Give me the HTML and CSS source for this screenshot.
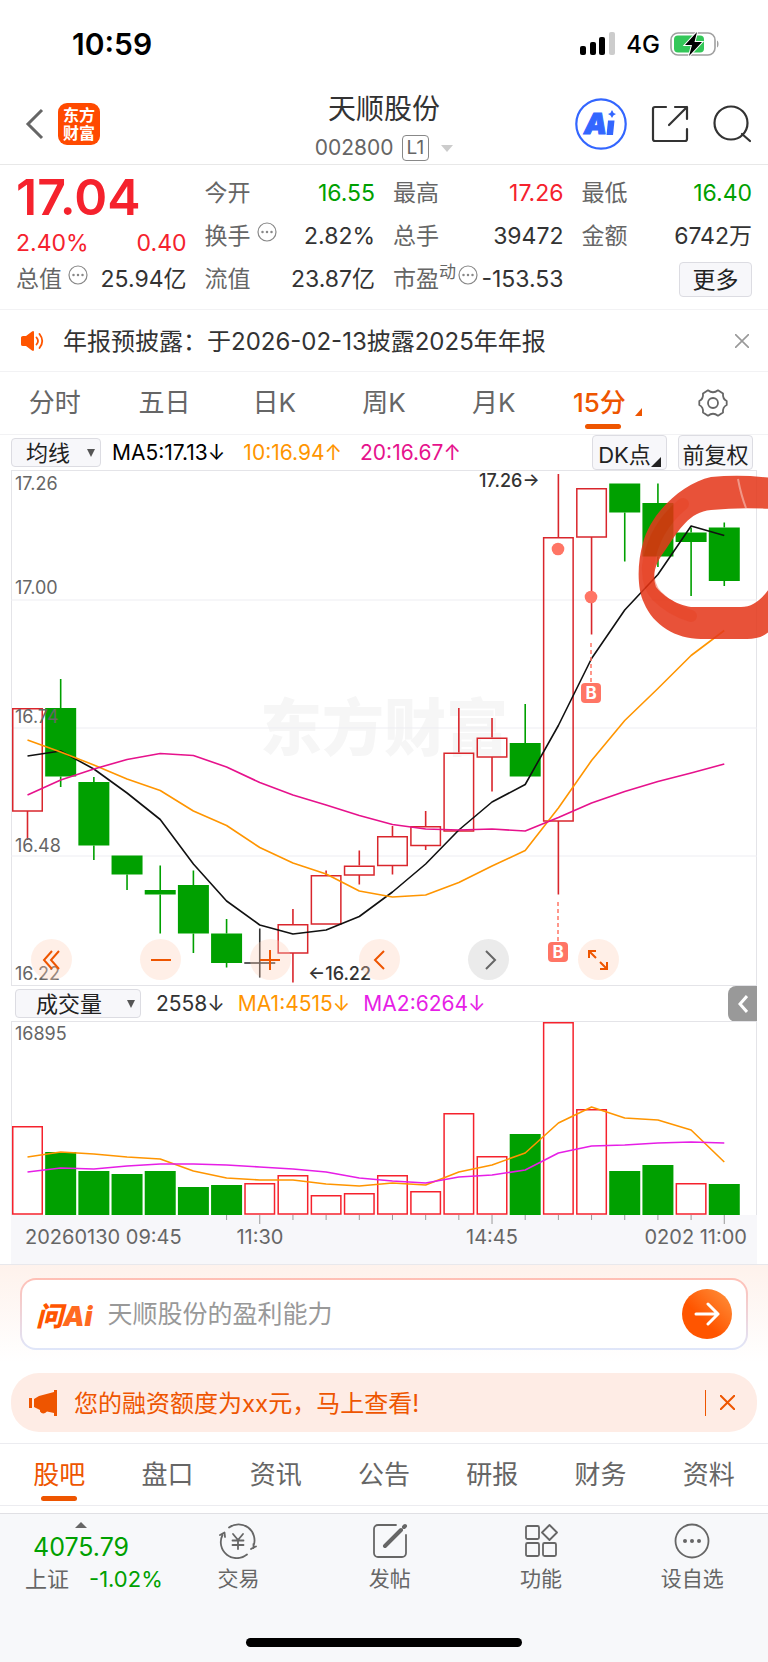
FILE: index.html
```html
<!DOCTYPE html>
<html lang="zh-CN">
<head>
    <meta charset="UTF-8">
    <meta name="viewport" content="width=device-width, initial-scale=1.0">
    <title>天顺股份 002800</title>
    <link rel="stylesheet" href="styles.css">
</head>
<body>
    <div class="status-bar">
        <span class="time">10:59</span>
        <div class="status-icons">
            <svg width="36" height="24" viewBox="0 0 36 24">
                <rect x="0" y="14" width="6" height="9" rx="2"/>
                <rect x="10" y="10" width="6" height="13" rx="2"/>
                <rect x="19" y="5" width="6" height="18" rx="2"/>
                <rect x="29" y="0" width="6" height="23" rx="2" fill="#ccc"/>
            </svg>
            <span class="network">4G</span>
            <svg width="50" height="24" viewBox="0 0 50 24">
                <rect x="1" y="1" width="44" height="22" rx="7" fill="none" stroke="#a0a0a0" stroke-width="1.6"/>
                <rect x="4" y="3.5" width="30" height="17" rx="4" fill="#34c759"/>
                <path d="M47 8.5c2 .8 2 6.200 0 7z" fill="#a0a0a0"/>
                <path d="M27 0 15 13h7l-3 11 13-14h-7.500z" stroke="#fff" stroke-width="2" paint-order="stroke"/>
            </svg>
        </div>
    </div>

    <header class="header">
        <div class="header-left">
            <button class="icon-btn" aria-label="返回">
                <svg width="20" height="32" viewBox="0 0 20 32" fill="none" stroke="#666" stroke-width="3"><path d="M18 2 4 16l14 14"/></svg>
            </button>
            <a class="logo" href="#">东方<br>财富</a>
        </div>
        <div class="header-title">
            <h1>天顺股份</h1>
            <div class="code">
                <span>002800</span>
                <span class="level">L1</span>
                <svg width="12" height="7" viewBox="0 0 12 7"><path d="M0 0h12L6 7z" fill="#ccc"/></svg>
            </div>
        </div>
        <div class="header-right">
            <button class="icon-btn" aria-label="AI">
                <svg width="52" height="52" viewBox="0 0 52 52">
                    <circle cx="26" cy="26" r="24.700" fill="none" stroke="#3366ff" stroke-width="2.200"/>
                    <text class="ai-text" x="9" y="36">A</text>
                    <path d="M33 22.500h6.500L38 37h-6.500z" fill="#3366ff"/>
                    <path d="M37 12q.8 3.200 4 4-3.200.8-4 4-.8-3.200-4-4 3.200-.8 4-4z" fill="#3366ff"/>
                </svg>
            </button>
            <button class="icon-btn" aria-label="分享">
                <svg width="38" height="38" viewBox="0 0 38 38" fill="none" stroke="#333" stroke-width="2.200" stroke-linecap="round" stroke-linejoin="round">
                    <path d="M15 2H4a2 2 0 0 0-2 2v30a2 2 0 0 0 2 2h30a2 2 0 0 0 2-2V24M24 2h12v12M36 2 18 20"/>
                </svg>
            </button>
            <button class="icon-btn" aria-label="搜索">
                <svg width="38" height="38" viewBox="0 0 38 38" fill="none" stroke="#333" stroke-width="2.200" stroke-linecap="round">
                    <circle cx="18" cy="18" r="16.500"/><path d="m29 29 8 7"/>
                </svg>
            </button>
        </div>
    </header>

    <section class="quote">
        <div class="quote-col">
            <div class="price">17.04</div>
            <div class="change"><span>2.40%</span><span>0.40</span></div>
            <div class="item">
                <span class="name">总值</span>
                <svg class="info" viewBox="0 0 20 20"><circle cx="10" cy="10" r="9"/><path d="M5.500 10h0M10 10h0M14.500 10h0"/></svg>
                <span class="value">25.94亿</span>
            </div>
        </div>
        <div class="quote-col">
            <div class="item"><span class="name">今开</span><span class="value green">16.55</span></div>
            <div class="item">
                <span class="name">换手</span>
                <svg class="info" viewBox="0 0 20 20"><circle cx="10" cy="10" r="9"/><path d="M5.500 10h0M10 10h0M14.500 10h0"/></svg>
                <span class="value">2.82%</span>
            </div>
            <div class="item"><span class="name">流值</span><span class="value">23.87亿</span></div>
        </div>
        <div class="quote-col">
            <div class="item"><span class="name">最高</span><span class="value red">17.26</span></div>
            <div class="item"><span class="name">总手</span><span class="value">39472</span></div>
            <div class="item pe">
                <span class="name">市盈<sup>动</sup></span>
                <svg class="info" viewBox="0 0 20 20"><circle cx="10" cy="10" r="9"/><path d="M5.500 10h0M10 10h0M14.500 10h0"/></svg>
                <span class="value">-153.53</span>
            </div>
        </div>
        <div class="quote-col">
            <div class="item"><span class="name">最低</span><span class="value green">16.40</span></div>
            <div class="item"><span class="name">金额</span><span class="value">6742万</span></div>
            <div class="item"><button class="more">更多</button></div>
        </div>
    </section>

    <div class="notice">
        <svg width="24" height="20" viewBox="0 0 24 20" fill="#ff5500">
            <path d="M1 6.500Q1 5 3 5h3l6-4.600q2-1 2 1v17.200q0 2-2 1L6 15H3q-2 0-2-1.500z"/>
            <path d="M16.500 6.500q3 3.500 0 7M19.500 3q5.500 7 0 14" fill="none" stroke="#ff5500" stroke-width="1.800" stroke-linecap="round"/>
        </svg>
        <p>年报预披露：于2026-02-13披露2025年年报</p>
        <button class="icon-btn" aria-label="关闭">
            <svg width="14" height="14" viewBox="0 0 14 14" stroke="#999" stroke-width="1.600"><path d="m0 0 14 14M14 0 0 14"/></svg>
        </button>
    </div>

    <nav class="tabs period-tabs">
        <a href="#">分时</a>
        <a href="#">五日</a>
        <a href="#">日K</a>
        <a href="#">周K</a>
        <a href="#">月K</a>
        <a href="#" class="active">15分<svg class="corner" width="7" height="8" viewBox="0 0 7 8"><path d="M7 0v8H0z" fill="#ee5500"/></svg></a>
        <button class="icon-btn" aria-label="设置">
            <svg width="30" height="28" viewBox="0 0 30 28" fill="none" stroke="#666" stroke-width="1.800" stroke-linejoin="round">
                <path d="M10 1.300q5 4 10 0l5 3.200q-.5 5.500 3.700 7.500v4q-4.200 2-3.700 7.500l-5 3.200q-5-4-10 0l-5-3.200q.5-5.500-3.700-7.500v-4Q5.500 10 5 4.500z"/>
                <circle cx="15" cy="14" r="5"/>
            </svg>
        </button>
    </nav>

    <div class="indicator-row">
        <label class="picker">
            <select aria-label="主图指标"><option>均线</option></select>
            <svg width="8" height="8" viewBox="0 0 8 8"><path d="M0 0h8L4 8z" fill="#555"/></svg>
        </label>
        <span class="ma5">MA5:17.13↓</span>
        <span class="ma10">10:16.94↑</span>
        <span class="ma20">20:16.67↑</span>
        <div class="chart-options">
            <button class="option">DK点<svg width="10" height="10" viewBox="0 0 10 10"><path d="M10 0v10H0z" fill="#222"/></svg></button>
            <button class="option">前复权</button>
        </div>
    </div>

    <div class="chart">
        <svg id="kline" class="kline" viewBox="0 0 746 516">
            <text class="watermark" x="249" y="281">东方财富</text>
            <path class="frame" d="M0 .5h746M0 515.500h746M.5 0v516M745.500 0v516"/>
            <path class="grid" d="M0 130h746M0 258h746M0 386h746"/>
            <g id="candles"></g>
            <g id="ma-lines"></g>
            <g class="axis-label">
                <text x="4" y="20">17.26</text>
                <text x="4" y="124">17.00</text>
                <text x="4" y="253">16.74</text>
                <text x="4" y="382">16.48</text>
                <text x="4" y="510">16.22</text>
            </g>
            <text class="extreme" x="468" y="17">17.26→</text>
            <text class="extreme" x="297" y="510">←16.22</text>
            <g class="signal">
                <circle cx="547" cy="79" r="6.300"/>
                <circle cx="580" cy="127" r="6.300"/>
                <path d="M547 432v40M580 173v40"/>
                <rect x="537" y="472" width="20" height="20" rx="4"/>
                <rect x="570" y="213" width="20" height="20" rx="4"/>
                <text x="547" y="488">B</text>
                <text x="580" y="229">B</text>
            </g>
            <g class="marker">
                <path d="M760 8Q730 4 700 7C672 13 640 42 632 73C626 93 626 119 633 133C642 155 665 169 690 169H736C746 169 754 166 760 160V116C752 128 743 137 730 137H680C665 135 650 124 645 117C640 103 646 91 655 79C668 60 678 42 700 40Q730 37 760 39Z"/>
                <path class="marker-dark" d="M672 34C650 52 640 74 637 96Q636 116 646 126Q660 140 680 146"/>
                <path class="marker-gap" d="M727 9q3 16 8 29"/>
            </g>
        </svg>
        <div class="chart-tools">
            <button class="tool" aria-label="最早"><svg width="22" height="22" viewBox="0 0 22 22"><path d="M11 2 3 11l8 9M18 2l-8 9 8 9"/></svg></button>
            <button class="tool" aria-label="缩小"><svg width="22" height="22" viewBox="0 0 22 22"><path d="M1 11h20"/></svg></button>
            <button class="tool" aria-label="放大"><svg width="22" height="22" viewBox="0 0 22 22"><path d="M1 11h20M11 1v20"/></svg></button>
            <button class="tool" aria-label="左移"><svg width="22" height="22" viewBox="0 0 22 22"><path d="m15 2-9 9 9 9"/></svg></button>
            <button class="tool disabled" aria-label="右移"><svg width="22" height="22" viewBox="0 0 22 22"><path d="m8 2 9 9-9 9"/></svg></button>
            <button class="tool" aria-label="全屏"><svg width="22" height="22" viewBox="0 0 22 22"><path d="M2 9V2h7M2 2l7 7M20 13v7h-7M20 20l-7-7"/></svg></button>
        </div>
    </div>

    <div class="indicator-row volume-row">
        <label class="picker wide">
            <select aria-label="副图指标"><option>成交量</option></select>
            <svg width="8" height="8" viewBox="0 0 8 8"><path d="M0 0h8L4 8z" fill="#555"/></svg>
        </label>
        <span>2558↓</span>
        <span class="ma10">MA1:4515↓</span>
        <span class="vol2">MA2:6264↓</span>
        <button class="collapse" aria-label="展开">
            <svg width="10" height="18" viewBox="0 0 10 18" fill="none" stroke="#fff" stroke-width="3"><path d="M9 1 2 9l7 8"/></svg>
        </button>
    </div>

    <div class="chart">
        <svg id="volume" class="kline" viewBox="0 0 746 243">
            <rect class="axis-bg" x="0" y="194" width="746" height="49"/>
            <path class="frame" d="M0 .5h746M.5 0v194M745.500 0v194"/>
            <text class="axis-label" x="4" y="19">16895</text>
            <g id="volume-bars"></g>
            <g id="volume-lines"></g>
            <g id="ticks"></g>
            <g class="time-label">
                <text x="14" y="223">20260130 09:45</text>
                <text x="249" y="223" text-anchor="middle">11:30</text>
                <text x="481" y="223" text-anchor="middle">14:45</text>
                <text x="736" y="223" text-anchor="end">0202 11:00</text>
            </g>
        </svg>
    </div>

    <section class="ask">
        <form class="ask-box">
            <label for="ask-input" class="ask-logo">问<span>Ai</span></label>
            <input type="text" id="ask-input" placeholder="天顺股份的盈利能力">
            <button type="button" class="ask-btn" aria-label="发送">
                <svg width="26" height="24" viewBox="0 0 26 24" fill="none" stroke="#fff" stroke-width="3" stroke-linecap="round" stroke-linejoin="round"><path d="M2 12h22M14 2l10 10-10 10"/></svg>
            </button>
        </form>
    </section>

    <div class="banner">
        <svg width="28" height="26" viewBox="0 0 28 26" fill="#ee5500">
            <path d="M0 8h3v10H0zM5 9l5-3L25 2V0h3v26h-3v-3l-7-1.500q-4 4-7 0V20l-6-3z"/>
        </svg>
        <a href="#">您的融资额度为xx元，马上查看!</a>
        <button class="icon-btn" aria-label="关闭">
            <svg width="15" height="15" viewBox="0 0 15 15" stroke="#ee5500" stroke-width="2"><path d="m0 0 15 15M15 0 0 15"/></svg>
        </button>
    </div>

    <nav class="tabs info-tabs">
        <a href="#" class="active">股吧</a>
        <a href="#">盘口</a>
        <a href="#">资讯</a>
        <a href="#">公告</a>
        <a href="#">研报</a>
        <a href="#">财务</a>
        <a href="#">资料</a>
    </nav>

    <footer class="bottom">
        <div class="bottom-bar">
            <a class="index" href="#">
                <span class="index-value">
                    <svg width="12" height="6" viewBox="0 0 12 6"><path d="M0 6h12L6 0z" fill="#666"/></svg>
                    4075.79
                </span>
                <span class="index-name">上证<em>-1.02%</em></span>
            </a>
            <button class="action">
                <svg width="38" height="36" viewBox="0 0 38 36" fill="none" stroke="#666" stroke-width="1.800" stroke-linecap="round" stroke-linejoin="round">
                    <path d="M10 4.500A16 16 0 0 1 34.500 23M32 26l2.500-1.500 2.500-1M28 31.500A16 16 0 0 1 3.500 12M1 12l4.500-2.500.5 4.500M34.500 21v4"/>
                    <path d="m14 11 5 6 5-6M19 17v9M13.500 17.500h11M13.500 22h11"/>
                </svg>
                交易
            </button>
            <button class="action">
                <svg width="36" height="36" viewBox="0 0 36 36" fill="none" stroke="#666" stroke-width="1.800" stroke-linecap="round">
                    <path d="M24 2H6a4 4 0 0 0-4 4v24a4 4 0 0 0 4 4h24a4 4 0 0 0 4-4V12"/>
                    <path d="M13 23 29 7M32 4l1-1" stroke-width="4"/>
                </svg>
                发帖
            </button>
            <button class="action">
                <svg width="36" height="36" viewBox="0 0 36 36" fill="none" stroke="#666" stroke-width="1.800" stroke-linejoin="round">
                    <rect x="3" y="3" width="13" height="13" rx="1.500"/>
                    <rect x="3" y="20" width="13" height="13" rx="1.500"/>
                    <rect x="20" y="20" width="13" height="13" rx="1.500"/>
                    <path d="m26.500 2 7.500 7.500-7.500 7.500L19 9.500z"/>
                </svg>
                功能
            </button>
            <button class="action">
                <svg width="36" height="36" viewBox="0 0 36 36">
                    <circle cx="18" cy="18" r="16.500" fill="none" stroke="#666" stroke-width="1.800"/>
                    <g fill="#666"><circle cx="11" cy="18" r="2"/><circle cx="18" cy="18" r="2"/><circle cx="25" cy="18" r="2"/></g>
                </svg>
                设自选
            </button>
        </div>
        <div class="home-indicator"></div>
    </footer>

    <script>
        const START = 16.5;
        const STEP = 33.18;
        const BODY = 31;

        // [color, high, body top, body bottom, low]
        const candles = [
            ['red', 238, 238, 341, 370],
            ['green', 209, 238, 306.5, 317],
            ['green', 307, 312, 375.5, 390],
            ['green', 385.5, 385.5, 404.5, 420],
            ['green', 395.5, 420, 424.5, 463.5],
            ['green', 400.5, 415, 463.5, 483],
            ['green', 449, 463.5, 493, 497.5],
            ['flat', 458.5, 493, 493, 507.5],
            ['red', 439, 454, 483, 512.5],
            ['red', 400.5, 405, 454, 454],
            ['red', 380.5, 395.5, 405, 414.5],
            ['red', 356, 366, 395.5, 404.5],
            ['red', 341, 356, 375.5, 380],
            ['red', 238, 282.5, 361, 361],
            ['red', 248, 267.5, 287, 321.5],
            ['green', 234, 273, 306.5, 306.5],
            ['red', 4, 67, 351, 424.5],
            ['red', 18, 18, 67, 164.5],
            ['green', 13.5, 13.5, 42.5, 91.5],
            ['green', 13.5, 33, 86.5, 97],
            ['green', 57.5, 62.5, 72, 126],
            ['green', 52.5, 57.5, 111, 116]
        ];

        const priceLines = {
            ma5: [286, 281, 299, 323, 349.5, 394, 431, 455, 464, 460, 446.5, 422, 394, 360, 332, 314.5, 255.5, 188.5, 140, 104.5, 56, 65.5],
            ma10: [270, 282, 295, 309, 320.5, 341, 355.5, 377.5, 393, 404, 421, 427, 425, 412.5, 396, 380.5, 338, 290.5, 250.5, 218.5, 185.5, 160.5],
            ma20: [325, 310, 299, 289.5, 283.5, 285.5, 297, 312.5, 325, 335, 345.5, 354.5, 359, 360, 359, 361, 347.5, 333, 321.5, 311.5, 303, 294]
        };

        const volumeTops = [105, 131, 150, 153, 150, 166, 164, 162, 154, 174, 172, 154, 170, 92, 135, 113, 1, 88, 150, 144, 162, 163];
        const volumeUp = [0, 7, 8, 9, 10, 11, 12, 13, 14, 16, 17, 20];
        const VOLUME_BASE = 194;

        const volumeLines = {
            ma10: [136, 131, 133, 136, 138, 150, 157, 159, 159, 163, 165, 162, 164, 151, 144, 132, 102, 86, 97, 99, 109, 141],
            vol2: [151, 147, 148, 145, 143, 143, 144, 146, 148, 151, 157, 160, 162, 156, 154, 149, 132, 125, 124, 122, 121, 122]
        };

        function xAt(i) {
            return START + STEP * i;
        }

        function drawBox(color, x, top, bottom) {
            if (color === 'green') {
                return `<rect class="body-green" x="${x - BODY / 2}" y="${top}" width="${BODY}" height="${bottom - top}"/>`;
            }
            return `<rect class="body-red" x="${x - BODY / 2 + 0.75}" y="${top + 0.75}" width="${BODY - 1.5}" height="${bottom - top - 0.75}"/>`;
        }

        function drawLines(id, lines) {
            let html = '';
            for (const name in lines) {
                const points = lines[name].map((y, i) => `${xAt(i)},${y}`).join(' ');
                html += `<polyline class="line line-${name}" points="${points}"/>`;
            }
            document.getElementById(id).innerHTML = html;
        }

        document.getElementById('candles').innerHTML = candles.map(([color, high, top, bottom, low], i) => {
            const x = xAt(i);
            const wick = `<path class="wick-${color}" d="M${x} ${high}V${top}M${x} ${bottom}V${low}"/>`;
            if (color === 'flat') {
                return wick + `<path class="wick-flat" d="M${x - BODY / 2} ${top}h${BODY}"/>`;
            }
            return wick + drawBox(color, x, top, bottom);
        }).join('');

        document.getElementById('volume-bars').innerHTML = volumeTops.map((top, i) => {
            const color = volumeUp.includes(i) ? 'red' : 'green';
            return drawBox(color, xAt(i), top, VOLUME_BASE - (color === 'red' ? 1 : 0));
        }).join('');

        // Time ticks, longer on labelled bars
        let ticks = '';
        for (let i = 6; i < candles.length; i++) {
            ticks += `<path class="tick" d="M${xAt(i)} ${VOLUME_BASE}v${i % 7 === 0 ? 9 : 5}"/>`;
        }
        document.getElementById('ticks').innerHTML = ticks;

        drawLines('ma-lines', priceLines);
        drawLines('volume-lines', volumeLines);
    </script>
</body>
</html>
```

FILE: styles.css
```css
* {
    box-sizing: border-box;
}

body {
    margin: 0;
    font-family: Inter, "Noto Sans CJK SC", sans-serif;
    font-size: 22px;
    color: #333;
    background: #fff;
    overflow-x: hidden;
}

svg {
    flex-shrink: 0;
}

button {
    padding: 0;
    border: 0;
    background: none;
    font: inherit;
    color: inherit;
}

a {
    color: inherit;
    text-decoration: none;
}

.icon-btn {
    display: flex;
    align-items: center;
    justify-content: center;
}

.red {
    color: #f5222d;
}

.green {
    color: #00a000;
}

/* Status bar */
.status-bar {
    display: flex;
    justify-content: space-between;
    align-items: center;
    height: 88px;
    padding: 0 48px 0 72px;
    color: #000;
}

.time {
    font-size: 30px;
    font-weight: 600;
}

.status-icons {
    display: flex;
    align-items: center;
    gap: 10px;
}

.network {
    font-size: 24px;
    font-weight: 500;
}

/* Header */
.header {
    display: grid;
    grid-template-columns: 1fr auto 1fr;
    align-items: center;
    height: 77px;
    padding: 0 17px;
    border-bottom: 1px solid #e8e8e8;
}

.header-left {
    display: flex;
    align-items: center;
    gap: 14px;
    padding: 0 0 4px 7px;
}

.logo {
    display: flex;
    align-items: center;
    justify-content: center;
    width: 42px;
    height: 42px;
    border-radius: 9px;
    background: #ff4a00;
    color: #fff;
    font-size: 16px;
    line-height: 18px;
    font-weight: 700;
}

.header-title {
    text-align: center;
}

h1 {
    margin: 0 0 4px;
    font-size: 28px;
    line-height: 40px;
    font-weight: 400;
}

.code {
    display: flex;
    align-items: center;
    justify-content: center;
    gap: 8px;
    font-size: 21px;
    line-height: 30px;
    color: #666;
}

.code svg {
    margin-left: 4px;
}

.level {
    padding: 0 4px;
    border: 1px solid #888;
    border-radius: 4px;
    font-size: 19px;
    line-height: 24px;
}

.header-right {
    display: flex;
    align-items: center;
    justify-content: flex-end;
    gap: 24px;
    padding-bottom: 4px;
}

.ai-text {
    fill: #3366ff;
    stroke: #3366ff;
    stroke-width: 1;
    font-size: 29px;
    font-weight: 900;
    font-style: italic;
}

/* Quote */
.quote {
    display: grid;
    grid-template-columns: repeat(4, 1fr);
    gap: 18px;
    padding: 7px 16px 8px;
    border-bottom: 1px solid #f2f2f4;
}

.quote-col {
    display: flex;
    flex-direction: column;
}

.price {
    height: 50px;
    font-size: 50px;
    line-height: 50px;
    font-weight: 600;
    color: #f5222d;
}

.change {
    display: flex;
    justify-content: space-between;
    height: 36px;
    font-size: 23px;
    line-height: 42px;
    color: #f5222d;
}

.item {
    display: flex;
    align-items: center;
    height: 43px;
    line-height: 43px;
    white-space: nowrap;
}

.name {
    font-size: 23px;
    color: #666;
}

.name sup {
    font-size: 17px;
    line-height: 1;
}

.value {
    margin-left: auto;
    font-size: 23px;
}

.info {
    width: 20px;
    height: 20px;
    margin: 0 0 10px 6px;
    fill: none;
    stroke: #888;
    stroke-width: 1.2;
}

.info path {
    stroke-width: 2.5;
    stroke-linecap: round;
}

.pe .info {
    margin-left: 2px;
}

.more {
    width: 73px;
    height: 35px;
    margin-left: auto;
    border: 1px solid #dcdce2;
    border-radius: 4px;
    background: #f7f7fa;
    font-size: 23px;
    line-height: 30px;
    color: #222;
}

/* Notice */
.notice {
    display: flex;
    align-items: center;
    height: 62px;
    padding: 0 19px 0 20px;
    border-bottom: 1px solid #f2f2f4;
}

.notice p {
    flex: 1;
    margin: 0 0 2px 19px;
    font-size: 24px;
}

/* Tabs */
.tabs {
    display: grid;
    grid-template-columns: repeat(7, 1fr);
    height: 63px;
    font-size: 26px;
    line-height: 62px;
    text-align: center;
    color: #666;
}

.tabs a {
    position: relative;
}

.tabs .active {
    color: #ee5500;
}

.tabs .active::after {
    content: "";
    position: absolute;
    left: 50%;
    bottom: 5px;
    width: 36px;
    height: 5px;
    margin-left: -18px;
    border-radius: 3px;
    background: #ee5500;
}

.period-tabs {
    border-bottom: 1px solid #f2f2f4;
}

.period-tabs .active {
    padding-right: 8px;
    font-weight: 500;
}

.corner {
    position: absolute;
    right: 16px;
    bottom: 18px;
}

/* Indicator rows */
.indicator-row {
    display: flex;
    align-items: center;
    gap: 18px;
    height: 35px;
    margin: 0 11px;
    font-size: 21px;
    white-space: nowrap;
}

.picker {
    display: flex;
    align-items: center;
    width: 90px;
    height: 29px;
    margin-right: -7px;
    padding-right: 5px;
    border: 1px solid #dcdce2;
    border-radius: 4px;
    background: #f7f7fa;
    font-size: 22px;
}

.picker select {
    flex: 1;
    min-width: 0;
    padding: 0 0 0 14px;
    border: 0;
    background: none;
    appearance: none;
    font: inherit;
    line-height: 26px;
    color: #222;
}

.ma5 {
    color: #000;
}

.ma10 {
    color: #ff9500;
}

.ma20 {
    color: #e6128c;
}

.vol2 {
    color: #e61ee6;
}

.chart-options {
    display: flex;
    gap: 11px;
    margin: 0 4px 0 auto;
}

.option {
    display: flex;
    align-items: center;
    justify-content: center;
    width: 75px;
    height: 35px;
    border: 1px solid #dcdce2;
    border-radius: 4px;
    background: #f7f7fa;
    font-size: 22px;
    color: #222;
}

.option svg {
    align-self: flex-end;
    margin-bottom: 2px;
}

.volume-row {
    gap: 13px;
}

.picker.wide {
    width: 126px;
    margin: 0 2px 0 4px;
    padding-right: 5px;
}

.picker.wide select {
    padding-left: 20px;
}

.collapse {
    display: flex;
    align-items: center;
    justify-content: center;
    width: 29px;
    height: 36px;
    margin-left: auto;
    border-radius: 8px 0 0 8px;
    background: #999;
}

/* Charts */
.chart {
    position: relative;
    margin: 0 11px;
}

.kline {
    display: block;
    width: 100%;
    height: auto;
    overflow: visible;
}

.frame,
.grid {
    fill: none;
    stroke: #e4e4e8;
}

.grid {
    stroke: #ededf2;
}

.watermark {
    fill: #f6f6f6;
    font-size: 62px;
    font-weight: 900;
}

.axis-label {
    fill: #666;
    font-size: 18px;
}

.axis-bg {
    fill: #f7f7fa;
}

.time-label {
    fill: #666;
    font-size: 20px;
}

.extreme {
    fill: #333;
    font-size: 18px;
    font-weight: 500;
}

.body-green {
    fill: #00a000;
}

.body-red {
    fill: none;
    stroke: #d9262c;
    stroke-width: 1.5;
}

#volume .body-red {
    stroke: #f5222d;
}

.wick-green {
    stroke: #00a000;
    stroke-width: 1.6;
}

.wick-red {
    stroke: #d9262c;
    stroke-width: 1.6;
}

.wick-flat {
    stroke: #333;
    stroke-width: 1.6;
}

.line {
    fill: none;
    stroke-width: 1.6;
    stroke-linejoin: round;
}

.line-ma5 {
    stroke: #111;
}

.line-ma10 {
    stroke: #ff9500;
}

.line-ma20 {
    stroke: #e6128c;
}

.line-vol2 {
    stroke: #e61ee6;
}

.tick {
    stroke: #999;
}

.signal circle,
.signal rect {
    fill: #ff7565;
}

.signal path {
    stroke: #ff7565;
    stroke-width: 1.5;
    stroke-dasharray: 4 3;
}

.signal text {
    fill: #fff;
    font-size: 17px;
    font-weight: 700;
    text-anchor: middle;
}

.marker {
    fill: #e5391c;
    opacity: 0.87;
}

.marker-dark {
    fill: none;
    stroke: #e32400;
    stroke-width: 12;
    stroke-linecap: round;
    opacity: 0.4;
}

.marker-gap {
    fill: none;
    stroke: #fff;
    stroke-width: 2;
    opacity: 0.4;
}

.chart-tools {
    position: absolute;
    left: 20px;
    right: 18%;
    bottom: 6px;
    display: flex;
    justify-content: space-between;
    padding-right: 4px;
}

.tool {
    display: flex;
    align-items: center;
    justify-content: center;
    width: 41px;
    height: 41px;
    border-radius: 50%;
    background: rgba(255, 205, 180, 0.32);
}

.tool svg {
    fill: none;
    stroke: #ee5500;
    stroke-width: 2;
}

.tool.disabled {
    background: rgba(190, 190, 190, 0.3);
}

.tool.disabled svg {
    stroke: #666;
}

/* Ask box */
.ask {
    padding: 13px 20px 23px;
    border-top: 1px solid #e8e8ec;
    background: linear-gradient(#fef2ec, #fff 90%);
}

.ask-box {
    display: flex;
    align-items: center;
    height: 72px;
    padding: 0 14px;
    border: 2px solid transparent;
    border-radius: 16px;
    background: linear-gradient(#fff, #fff) padding-box, linear-gradient(#ffbfb5, #dfe6fa) border-box;
}

.ask-logo {
    font-size: 27px;
    font-weight: 900;
    font-style: italic;
    color: #ff5500;
}

.ask-logo span {
    color: #ff6a20;
}

.ask-box input {
    flex: 1;
    min-width: 0;
    padding: 0 0 0 15px;
    border: 0;
    outline: none;
    background: none;
    font: inherit;
    font-size: 25px;
}

.ask-box input::placeholder {
    color: #999;
}

.ask-btn {
    display: flex;
    align-items: center;
    justify-content: center;
    width: 50px;
    height: 50px;
    border-radius: 50%;
    background: linear-gradient(225deg, #ff9540, #ff5500 60%);
}

/* Banner */
.banner {
    display: flex;
    align-items: center;
    height: 59px;
    margin: 0 11px 11px;
    padding: 0 22px 0 18px;
    border-radius: 28px;
    background: #feece5;
    color: #ee5500;
}

.banner a {
    flex: 1;
    margin: 0 0 3px 17px;
    font-size: 24px;
}

.banner .icon-btn {
    height: 26px;
    padding-left: 14px;
    border-left: 1px solid #ee5500;
}

.info-tabs {
    padding: 0 5px;
    border-top: 1px solid #ececf0;
    border-bottom: 1px solid #ececf0;
    margin-bottom: 7px;
}

/* Bottom bar */
.bottom {
    height: 149px;
    border-top: 1px solid #e0e0e4;
    background: #f7f8fa;
}

.bottom-bar {
    display: grid;
    grid-template-columns: repeat(5, 1fr);
    height: 124px;
    padding: 8px 0 0 10px;
}

.index {
    display: flex;
    flex-direction: column;
    align-items: flex-start;
    padding-left: 15px;
    white-space: nowrap;
}

.index-value {
    display: flex;
    flex-direction: column;
    align-items: center;
    gap: 3px;
    padding-left: 8px;
    font-size: 25px;
    line-height: 32px;
    color: #00a000;
}

.index-name {
    font-size: 22px;
    line-height: 32px;
    color: #666;
}

.index-name em {
    margin-left: 20px;
    font-style: normal;
    color: #00a000;
}

.action {
    display: flex;
    flex-direction: column;
    align-items: center;
    gap: 4px;
    padding-top: 1px;
    font-size: 21px;
    line-height: 32px;
    color: #666;
}

.home-indicator {
    width: 36%;
    height: 9px;
    margin: 0 auto;
    border-radius: 5px;
    background: #000;
}
```
